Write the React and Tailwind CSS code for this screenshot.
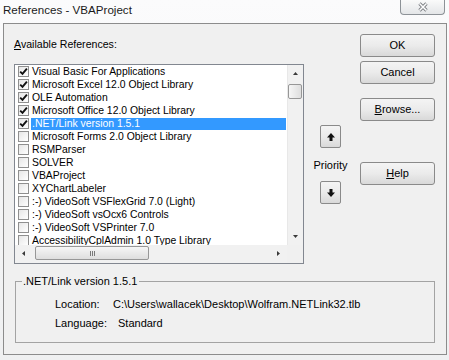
import React from "react";

const items = [
    { label: "Visual Basic For Applications", checked: true },
    { label: "Microsoft Excel 12.0 Object Library", checked: true },
    { label: "OLE Automation", checked: true },
    { label: "Microsoft Office 12.0 Object Library", checked: true },
    { label: ".NET/Link version 1.5.1", checked: true, selected: true },
    { label: "Microsoft Forms 2.0 Object Library" },
    { label: "RSMParser" },
    { label: "SOLVER" },
    { label: "VBAProject" },
    { label: "XYChartLabeler" },
    { label: ":-) VideoSoft VSFlexGrid 7.0 (Light)" },
    { label: ":-) VideoSoft vsOcx6 Controls" },
    { label: ":-) VideoSoft VSPrinter 7.0" },
    { label: "AccessibilityCplAdmin 1.0 Type Library" },
];

const Tri = ({ dir }) => {
    const pts = {
        up: "0,3 2.5,0 5,3",
        down: "0,0 5,0 2.5,3",
        left: "3,0 3,5 0,2.5",
        right: "0,0 3,2.5 0,5",
    }[dir];
    const vertical = dir === "up" || dir === "down";
    return (
        <svg width={vertical ? 5 : 3} height={vertical ? 3 : 5} viewBox={vertical ? "0 0 5 3" : "0 0 3 5"}>
            <polygon points={pts} fill="#3a3a3a" />
        </svg>
    );
};

const Checkbox = ({ checked }) => (
    <div className="w-[11px] h-[11px] shrink-0 border border-[#8f8f8f] bg-gradient-to-br from-[#e6e6e6] to-white flex items-center justify-center">
        {checked && (
            <svg width="9" height="9" viewBox="0 0 9 9">
                <path d="M1.2 4.6 L3.5 6.9 L7.9 1.6" stroke="#111" strokeWidth="1.9" fill="none" />
            </svg>
        )}
    </div>
);

const Button = ({ children, className = "" }) => (
    <div
        className={
            "h-[23px] border border-[#8a8a8a] rounded-[3px] bg-gradient-to-b from-[#f4f4f4] via-[#ebebeb] to-[#d9d9d9] flex items-center justify-center text-[11px] text-black " +
            className
        }
    >
        {children}
    </div>
);

const ArrowButton = ({ down }) => (
    <div className="w-[21px] h-[23px] mx-auto border border-[#8a8a8a] rounded-[2px] bg-gradient-to-b from-[#f4f4f4] via-[#ebebeb] to-[#d9d9d9] flex items-center justify-center">
        <svg width="8" height="8" viewBox="0 0 8 8" className={down ? "rotate-180" : ""}>
            <path d="M4 0 L8 4.5 L5.5 4.5 L5.5 8 L2.5 8 L2.5 4.5 L0 4.5 Z" fill="#111" />
        </svg>
    </div>
);

const ListBox = () => (
    <div className="w-[290px] h-[200px] border border-[#828790] bg-white flex flex-col text-[10.4px]">
        <div className="flex h-[180px]">
            <div className="w-[272px] overflow-hidden">
                {items.map((it) => (
                    <div key={it.label} className="h-[13px] flex items-center whitespace-nowrap">
                        <div className="ml-[3px]">
                            <Checkbox checked={it.checked} />
                        </div>
                        <span
                            className={
                                "ml-[2px] pl-[1px] h-[12px] leading-[12px] flex-1 mr-[1px] " +
                                (it.selected ? "bg-[#3399ff] text-white" : "")
                            }
                        >
                            {it.label}
                        </span>
                    </div>
                ))}
            </div>
            <div className="w-[16px] bg-[#f1f1f1] border-l border-[#e8e8e8] flex flex-col">
                <div className="h-[17px] flex items-center justify-center">
                    <Tri dir="up" />
                </div>
                <div className="mt-[2px] mr-[1px] h-[15px] border border-[#979797] rounded-[2px] bg-gradient-to-r from-[#f6f6f6] to-[#dedede]" />
                <div className="flex-1" />
                <div className="h-[17px] flex items-center justify-center">
                    <Tri dir="down" />
                </div>
            </div>
        </div>
        <div className="flex h-[18px]">
            <div className="w-[272px] bg-[#f1f1f1] flex items-start">
                <div className="w-[17px] h-[17px] flex items-center justify-center">
                    <Tri dir="left" />
                </div>
                <div className="ml-[3px] mt-[1px] w-[114px] h-[14px] border border-[#979797] rounded-[2px] bg-gradient-to-b from-[#f6f6f6] to-[#dedede] flex items-center justify-center">
                    <div className="flex gap-[1px]">
                        <div className="w-[1px] h-[5px] bg-[#7a7a7a]" />
                        <div className="w-[1px] h-[5px] bg-[#7a7a7a]" />
                        <div className="w-[1px] h-[5px] bg-[#7a7a7a]" />
                    </div>
                </div>
                <div className="flex-1" />
                <div className="w-[17px] h-[17px] flex items-center justify-center">
                    <Tri dir="right" />
                </div>
            </div>
            <div className="w-[16px] bg-[#f0f0f0]" />
        </div>
    </div>
);

const App = () => {
    return (
        <div className="w-[449px] h-[360px] overflow-hidden bg-gradient-to-b from-[#fbfbfc] to-[#eff0f1] font-['Liberation_Sans',Arial,sans-serif] text-black flex flex-col">
            <div className="h-[23px] shrink-0 flex items-start">
                <div className="pl-[3px] pt-[3px] text-[11.6px] leading-[14px] text-[#1a1a1a]">References - VBAProject</div>
                <div className="ml-auto mr-[4px] w-[45px] h-[15px] border border-t-0 border-[#8d9297] rounded-b-[4px] bg-gradient-to-b from-[#fafafa] to-[#e4e6e8] flex items-center justify-center">
                    <svg width="12" height="10" viewBox="0 0 12 10">
                        <path d="M2.5 1.5 L9.5 8.5 M9.5 1.5 L2.5 8.5" stroke="#7c7f84" strokeWidth="3.2" />
                        <path d="M2.5 1.5 L9.5 8.5 M9.5 1.5 L2.5 8.5" stroke="#ffffff" strokeWidth="1.5" />
                    </svg>
                </div>
            </div>

            <div className="ml-[3px] w-[444px] h-[332px] shrink-0 border border-[#8c8c8c] bg-[#f0f0f0] flex flex-col text-[10.6px] leading-[13px]">
                <div className="flex">
                    <div className="ml-[10px] pt-[13px] flex flex-col">
                        <div className="h-[14px] leading-[14px]">
                            <span className="underline underline-offset-1">A</span>vailable References:
                        </div>
                        <div className="mt-[13px]">
                            <ListBox />
                        </div>
                    </div>

                    <div className="ml-[7px] w-[39px] pt-[101px] flex flex-col">
                        <ArrowButton />
                        <div className="mt-[10px] h-[14px] leading-[14px] text-center text-[11px]">Priority</div>
                        <div className="mt-[9px]">
                            <ArrowButton down />
                        </div>
                    </div>

                    <div className="ml-[10px] w-[75px] pt-[10px] flex flex-col">
                        <Button>OK</Button>
                        <Button className="mt-[4px]">Cancel</Button>
                        <Button className="mt-[14px]">
                            <span className="underline underline-offset-1">B</span>rowse...
                        </Button>
                        <Button className="mt-[41px]">
                            <span className="underline underline-offset-1">H</span>elp
                        </Button>
                    </div>
                </div>

                <fieldset className="mt-[11px] ml-[11px] w-[420px] h-[68px] border border-[#a3a3a3]">
                    <legend className="ml-[6px] pl-[1px] pr-[2px] h-[13px] leading-[13px] text-[11px]">.NET/Link version 1.5.1</legend>
                    <div className="mt-[10px] pl-[39px] flex h-[13px] text-[11px]">
                        <span className="w-[58px]">Location:</span>
                        <span>C:\Users\wallacek\Desktop\Wolfram.NETLink32.tlb</span>
                    </div>
                    <div className="mt-[6px] pl-[39px] flex h-[13px] text-[11px]">
                        <span className="w-[58px]">Language:</span>
                        <span className="pl-[5px]">Standard</span>
                    </div>
                </fieldset>
            </div>
        </div>
    );
};

export default App;
